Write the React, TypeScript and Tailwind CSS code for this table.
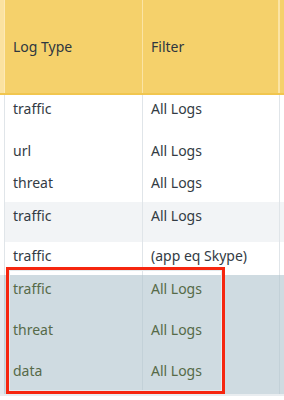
import React from "react";

type Row = { type: string; filter: string; h: string; tone: "white" | "alt" | "sel" };

const rows: Row[] = [
  { type: "traffic", filter: "All Logs", h: "h-[42px]", tone: "white" },
  { type: "url", filter: "All Logs", h: "h-[32px]", tone: "white" },
  { type: "threat", filter: "All Logs", h: "h-[33px]", tone: "white" },
  { type: "traffic", filter: "All Logs", h: "h-[40px]", tone: "alt" },
  { type: "traffic", filter: "(app eq Skype)", h: "h-[33px]", tone: "white" },
  { type: "traffic", filter: "All Logs", h: "h-[41px]", tone: "sel" },
  { type: "threat", filter: "All Logs", h: "h-[41px]", tone: "sel" },
  { type: "data", filter: "All Logs", h: "h-[37px]", tone: "sel" },
];

const bgFor = (tone: Row["tone"]) =>
  tone === "sel" ? "bg-[#cfdbe1]" : tone === "alt" ? "bg-[#f2f4f6]" : "bg-white";

export default function App() {
  return (
    <div
      className="relative w-[284px] h-[400px] overflow-hidden bg-white text-[14px] leading-[20px]"
      style={{ fontFamily: '"Noto Sans", "DejaVu Sans", sans-serif' }}
    >
      {/* header */}
      <div className="flex h-[95px] bg-[#f5d16b] border-b-2 border-[#f1c64f] text-[#2e3640]">
        <div className="w-[5px] shrink-0 bg-[#fbe2a0] border-r border-[#fde9b5]" />
        <div className="w-[138px] shrink-0 border-r border-[#fbe4a4] flex items-center pl-[8px]">
          Log Type
        </div>
        <div className="w-[137px] shrink-0 border-r-2 border-[#fbe4a4] flex items-center pl-[8px]">
          Filter
        </div>
        <div className="flex-1" />
      </div>

      {/* body rows */}
      {rows.map((r, i) => {
        const bg = bgFor(r.tone);
        const txt = r.tone === "sel" ? "text-[#566a48]" : "text-[#333b44]";
        const line = r.tone === "sel" ? "border-[#c3d1d8]" : "border-[#e0e5e9]";
        return (
          <div key={i} className={`flex ${r.h} ${bg} ${txt}`}>
            <div className={`w-[5px] shrink-0 border-r ${line} ${r.tone === "sel" ? "bg-[#e4eaee]" : "bg-white"}`} />
            <div className={`w-[138px] shrink-0 border-r ${line} pl-[8px] pt-[4px]`}>{r.type}</div>
            <div className={`w-[137px] shrink-0 border-r ${line} pl-[8px] pt-[4px]`}>{r.filter}</div>
            <div className="flex-1" />
          </div>
        );
      })}
      <div className="h-[2px] bg-[#e9edf0]" />

      {/* highlight frame over the last three rows */}
      <div className="absolute left-[6px] top-[267px] w-[219px] h-[127px] border-[3px] border-[#f6260f]">
        <div className="w-full h-full border border-[#e4ebee]" />
      </div>
    </div>
  );
}
